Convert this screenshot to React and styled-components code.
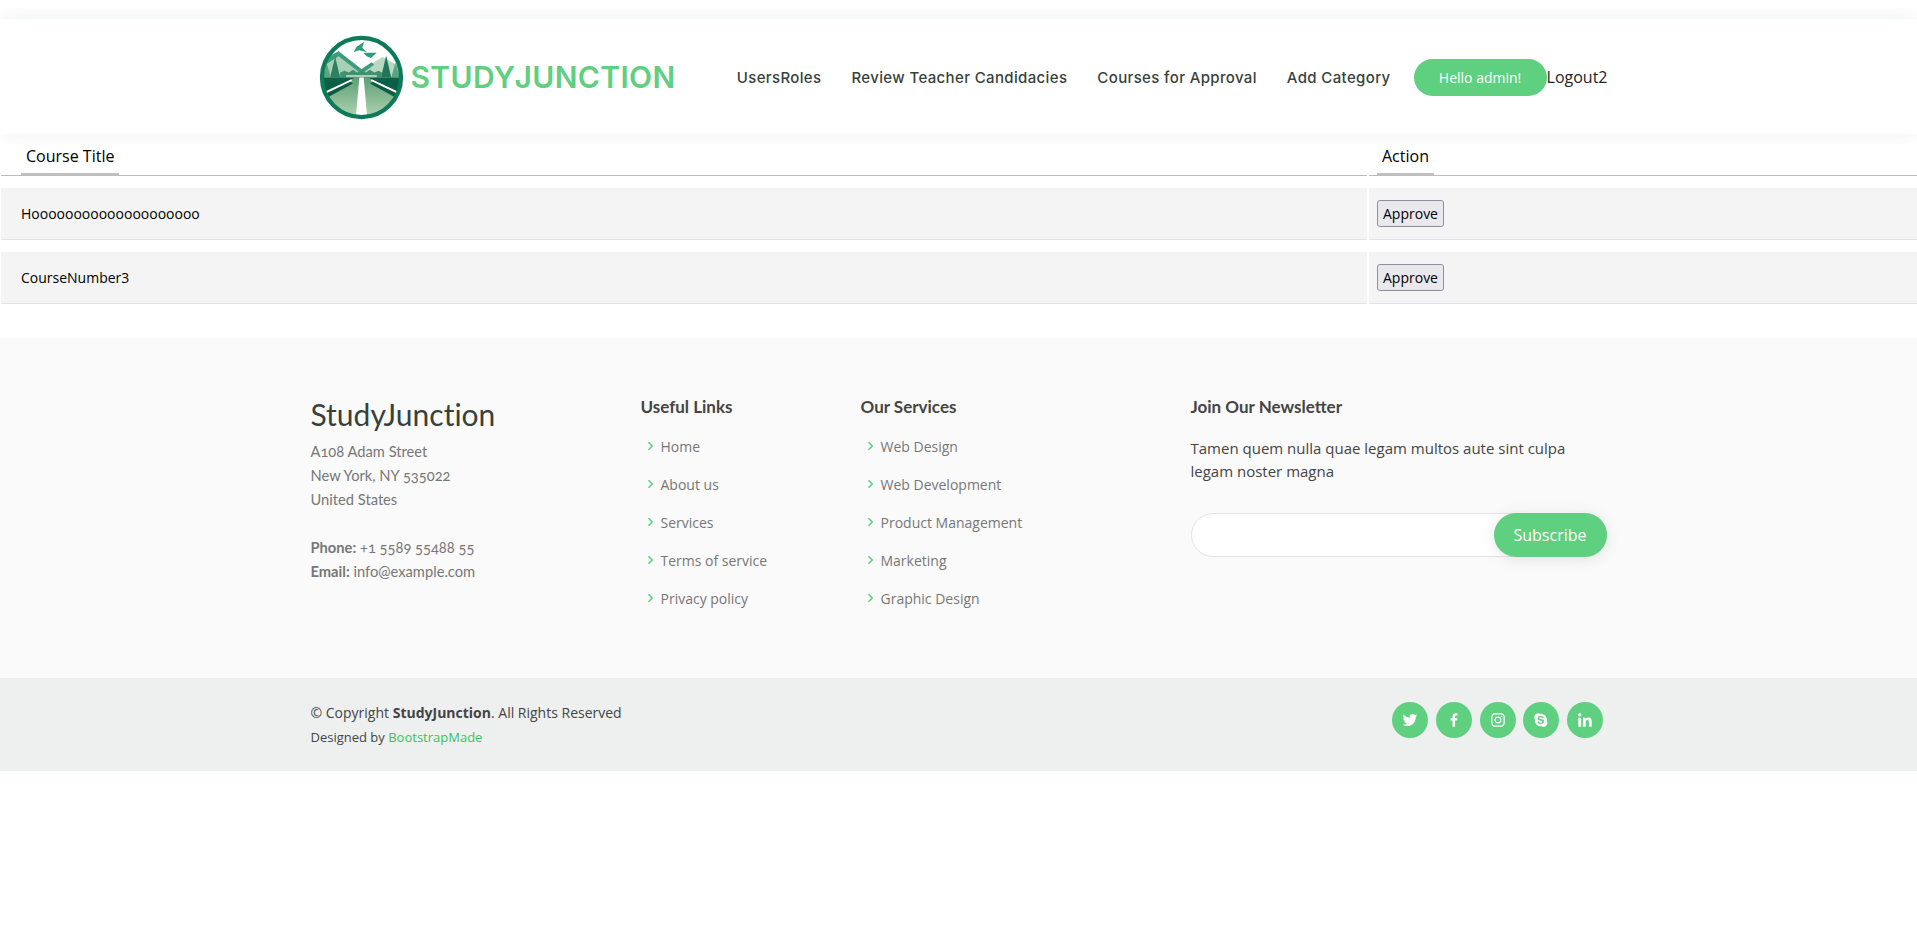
import React from 'react';
import styled, { createGlobalStyle } from 'styled-components';
import { BiChevronRight, BiLogoTwitter, BiLogoFacebook, BiLogoInstagram, BiLogoSkype, BiLogoLinkedin } from 'react-icons/bi';

const green = '#5fcf80';

const GlobalStyle = createGlobalStyle`
  * { box-sizing: border-box; }
  html, body {
    overflow-x: hidden;
  }
  body {
    margin: 0;
    background: #fff;
    color: #444;
    font-family: "Open Sans", sans-serif;
  }
  a { text-decoration: none; }
`;

const Logo = () => (
  <LogoSvg viewBox="0 0 100 100">
    <defs>
      <clipPath id="disc"><circle cx="50" cy="50" r="46" /></clipPath>
      <linearGradient id="road" x1="0" y1="0" x2="0" y2="1">
        <stop offset="0" stopColor="#5f9f78" />
        <stop offset="1" stopColor="#b4d8b4" />
      </linearGradient>
      <linearGradient id="ground" x1="0" y1="0" x2="0" y2="1">
        <stop offset="0" stopColor="#0b6148" />
        <stop offset="1" stopColor="#0f4f3b" />
      </linearGradient>
    </defs>
    <g clipPath="url(#disc)">
      <rect width="100" height="100" fill="#fff" />
      <path d="M48 42 L75 26 L100 40 V52 H48Z" fill="#b9d9bf" />
      <path d="M0 32 L23 19 L50 42 V52 H0Z" fill="#a9d0b4" />
      <path d="M0 32 L23 19 L50 40 L62 32 L65 35 L50 46 L23 25 L0 40Z" fill="#3d9c7e" />
      <path d="M44 14 L53 8 L51 15 L56 20 L47 18 L41 20Z" fill="#2f9b7b" />
      <path d="M52 21 L68 21 L61 27 L56 25Z" fill="#2f9b7b" />
      <path d="M13 50 L19 26 L25 50Z" fill="#2c7f60" />
      <path d="M4 50 L9 33 L14 50Z" fill="#5aa586" />
      <path d="M73 50 L79 24 L85 50Z" fill="#20765a" />
      <path d="M85 50 L90 32 L95 50Z" fill="#5aa586" />
      <path d="M25 50 V44 L30 42 L35 44 L40 41 L45 44 L50 42 L55 44 L60 41 L65 44 L70 42 L74 44 V50Z" fill="#3f8f70" />
      <rect x="32" y="47" width="36" height="3" fill="#a9d0b4" />
      <rect y="50" width="100" height="50" fill="url(#ground)" />
      <path d="M42 50 H58 L100 74 V100 H0 V74Z" fill="url(#road)" />
      <path d="M47.5 50 H52.5 L57 100 H43Z" fill="#fff" />
      <path d="M38 52 L0 70 V73 L39 54Z" fill="#fff" />
      <path d="M62 52 L100 70 V73 L61 54Z" fill="#fff" />
      <path d="M37 55 L0 73 V79 L40 57Z" fill="#0d5c43" />
      <path d="M63 55 L100 73 V79 L60 57Z" fill="#0d5c43" />
    </g>
    <circle cx="50" cy="50" r="46.5" fill="none" stroke="#0d7a5a" strokeWidth="5" />
  </LogoSvg>
);

const rows = ['Hoooooooooooooooooooo', 'CourseNumber3'];
const navLinks = ['UsersRoles', 'Review Teacher Candidacies', 'Courses for Approval', 'Add Category'];
const usefulLinks = ['Home', 'About us', 'Services', 'Terms of service', 'Privacy policy'];
const serviceLinks = ['Web Design', 'Web Development', 'Product Management', 'Marketing', 'Graphic Design'];
const socials = [BiLogoTwitter, BiLogoFacebook, BiLogoInstagram, BiLogoSkype, BiLogoLinkedin];

const LinkList = ({ title, items }) => (
  <div>
    <ColumnTitle>{title}</ColumnTitle>
    <Links>
      {items.map(item => (
        <LinkRow key={item}>
          <BiChevronRight size={18} />
          <a href="#">{item}</a>
        </LinkRow>
      ))}
    </Links>
  </div>
);

const App = () => {
  return (
    <>
      <GlobalStyle />
      <Header>
        <HeaderInner>
          <Brand href="#">
            <Logo />
            <BrandName>STUDYJUNCTION</BrandName>
          </Brand>
          <Nav>
            {navLinks.map(link => (
              <NavLink key={link} href="#">{link}</NavLink>
            ))}
            <HelloButton href="#">Hello admin!</HelloButton>
            <Logout href="#">Logout2</Logout>
          </Nav>
        </HeaderInner>
      </Header>

      <CourseTable>
        <colgroup>
          <col style={{ width: 1366 }} />
          <col />
        </colgroup>
        <thead>
          <tr>
            <HeadCell $inset={20}><HeadLabel>Course Title</HeadLabel></HeadCell>
            <HeadCell $inset={8}><HeadLabel>Action</HeadLabel></HeadCell>
          </tr>
        </thead>
        <tbody>
          {rows.map(title => (
            <tr key={title}>
              <Cell $inset={20}>{title}</Cell>
              <Cell $inset={8}><ApproveButton>Approve</ApproveButton></Cell>
            </tr>
          ))}
        </tbody>
      </CourseTable>

      <Footer>
        <FooterTop>
          <FooterGrid>
            <div>
              <FooterBrand>StudyJunction</FooterBrand>
              <Address>
                A108 Adam Street<br />
                New York, NY 535022<br />
                United States<br /><br />
                <strong>Phone:</strong> +1 5589 55488 55<br />
                <strong>Email:</strong> info@example.com
              </Address>
            </div>
            <LinkList title="Useful Links" items={usefulLinks} />
            <LinkList title="Our Services" items={serviceLinks} />
            <div>
              <ColumnTitle>Join Our Newsletter</ColumnTitle>
              <NewsText>Tamen quem nulla quae legam multos aute sint culpa legam noster magna</NewsText>
              <NewsForm>
                <NewsInput type="email" />
                <NewsButton type="button">Subscribe</NewsButton>
              </NewsForm>
            </div>
          </FooterGrid>
        </FooterTop>
        <FooterBottom>
          <BottomInner>
            <div>
              <Copyright>© Copyright <strong>StudyJunction</strong>. All Rights Reserved</Copyright>
              <Credits>Designed by <a href="#">BootstrapMade</a></Credits>
            </div>
            <Socials>
              {socials.map((Icon, i) => (
                <SocialLink key={i} href="#"><Icon size={18} /></SocialLink>
              ))}
            </Socials>
          </BottomInner>
        </FooterBottom>
      </Footer>
    </>
  );
};

export default App;

const Header = styled.header`
  position: relative;
  margin-top: 19px;
  height: 115px;
  background: #fff;
  box-shadow: 0 0 18px rgba(55, 66, 59, 0.08);
`;

const HeaderInner = styled.div`
  width: 1320px;
  height: 100%;
  margin: 0 auto;
  padding: 1px 11px 0 20px;
  display: flex;
  align-items: center;
  justify-content: space-between;
`;

const Brand = styled.a`
  display: flex;
  align-items: center;
  gap: 7px;
`;

const LogoSvg = styled.svg`
  width: 85px;
  height: 85px;
  display: block;
`;

const BrandName = styled.span`
  font-family: Inter, sans-serif;
  font-size: 30px;
  font-weight: 600;
  letter-spacing: 0.35px;
  color: ${green};
`;

const Nav = styled.nav`
  display: flex;
  align-items: center;
`;

const NavLink = styled.a`
  margin-right: 30px;
  font-family: Inter, sans-serif;
  font-size: 15px;
  font-weight: 500;
  letter-spacing: 0.36px;
  color: #37423b;
  white-space: nowrap;
`;

const HelloButton = styled.a`
  margin-left: -7px;
  width: 133px;
  height: 37px;
  display: flex;
  align-items: center;
  justify-content: center;
  border-radius: 50px;
  background: ${green};
  color: #fff;
  font-size: 14px;
`;

const Logout = styled.a`
  font-size: 16px;
  color: #212529;
`;

const CourseTable = styled.table`
  width: calc(100% + 3px);
  margin-left: -1px;
  table-layout: fixed;
  border-collapse: separate;
  border-spacing: 2px 12px;
`;

const HeadCell = styled.th`
  height: 30px;
  padding: 0 0 0 ${props => props.$inset}px;
  border-bottom: 1px solid #bdbdbd;
  text-align: left;
  vertical-align: top;
  font-size: 16px;
  font-weight: 400;
  color: #000;
`;

const HeadLabel = styled.span`
  display: block;
  width: fit-content;
  height: 29px;
  padding: 0 5px;
  line-height: 21px;
  border-bottom: 2px solid #c0c0c0;
`;

const Cell = styled.td`
  height: 52px;
  padding: 0 0 0 ${props => props.$inset}px;
  background: #f4f4f4;
  border-bottom: 1px solid #e2e2ea;
  font-size: 14px;
  color: #000;
`;

const ApproveButton = styled.button`
  display: block;
  height: 27px;
  padding: 0 4px;
  width: 67px;
  background: #e9e9ed;
  border: 1px solid #8f8f9d;
  border-radius: 3px;
  font-family: "Open Sans", sans-serif;
  font-size: 14px;
  color: #000;
`;

const Footer = styled.footer`
  margin-top: 22px;
  font-size: 14px;
`;

const FooterTop = styled.div`
  height: 340px;
  padding-top: 59px;
  background: #fafafa;
`;

const FooterGrid = styled.div`
  width: 1320px;
  margin: 0 auto;
  display: grid;
  grid-template-columns: 330px 220px 330px 440px;
  & > div {
    padding: 0 12px;
  }
`;

const FooterBrand = styled.h3`
  margin: 0 0 8px;
  font-family: Lato, sans-serif;
  font-size: 30px;
  font-weight: 400;
  line-height: 34px;
  font-variant-ligatures: none;
  color: #37423b;
`;

const Address = styled.p`
  margin: 0;
  font-family: Lato, sans-serif;
  font-size: 14.7px;
  line-height: 24px;
  color: #777;
  font-feature-settings: 'onum';
`;

const ColumnTitle = styled.h4`
  margin: 0;
  font-family: Lato, sans-serif;
  font-size: 17px;
  font-weight: 700;
  line-height: 19px;
  color: #444;
`;

const Links = styled.ul`
  list-style: none;
  margin: 11px 0 0;
  padding: 0;
`;

const LinkRow = styled.li`
  height: 38px;
  display: flex;
  align-items: center;
  svg {
    color: ${green};
    margin-right: 2px;
  }
  a {
    color: #777;
  }
`;

const NewsText = styled.p`
  margin: 21px 0 0;
  font-size: 15px;
  line-height: 22.5px;
  color: #444;
`;

const NewsForm = styled.form`
  position: relative;
  height: 44px;
  margin-top: 31px;
  background: #fff;
  border: 1px solid #e3e3e3;
  border-radius: 50px;
`;

const NewsInput = styled.input`
  width: 300px;
  height: 100%;
  padding: 4px 8px;
  border: 0;
  background: transparent;
`;

const NewsButton = styled.button`
  position: absolute;
  top: -1px;
  right: -1px;
  bottom: -1px;
  width: 113px;
  border: 0;
  border-radius: 50px;
  background: ${green};
  box-shadow: 0px 2px 15px rgba(0, 0, 0, 0.1);
  color: #fff;
  font-family: "Open Sans", sans-serif;
  font-size: 16px;
`;

const FooterBottom = styled.div`
  height: 93px;
  background: #eef0ef;
`;

const BottomInner = styled.div`
  width: 1320px;
  height: 100%;
  margin: 0 auto;
  padding: 24px 15.7px 0 12px;
  display: flex;
  justify-content: space-between;
  align-items: flex-start;
`;

const Copyright = styled.div`
  font-size: 14px;
  line-height: 21px;
  color: #444;
`;

const Credits = styled.div`
  margin-top: 5px;
  font-size: 13px;
  line-height: 19px;
  color: #444;
  a {
    color: #3ac162;
  }
`;

const Socials = styled.div`
  display: flex;
  gap: 7.6px;
`;

const SocialLink = styled.a`
  width: 36px;
  height: 36px;
  display: flex;
  align-items: center;
  justify-content: center;
  border-radius: 50%;
  background: ${green};
  color: #fff;
`;
